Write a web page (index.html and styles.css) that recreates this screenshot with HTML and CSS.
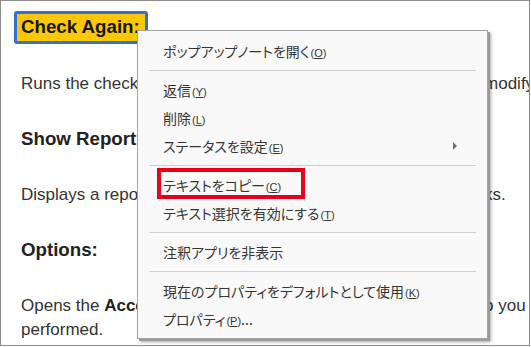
FILE: index.html
```html
<!DOCTYPE html>
<html lang="en">
<head>
<meta charset="utf-8">
<title>Accessibility Checker</title>
<link rel="stylesheet" href="styles.css">
</head>
<body>
<div class="frame">
  <div class="doc">
    <div class="head first"><span class="focus">Check Again:</span></div>
    <p class="line">Runs the checker again on all items. Choose this option after modifying one or more items.</p>
    <div class="head">Show Report:</div>
    <p class="line">Displays a report with links to tips for resolving the failed checks.</p>
    <div class="head">Options:</div>
    <p class="wrap">Opens the <b>Accessibility Checker Options</b> dialog box now, so you can select which checks are performed.</p>
  </div>

  <div class="menu">
    <div class="item">ポップアップノートを開く<span class="key">(<u>O</u>)</span></div>
    <div class="sep"></div>
    <div class="item">返信<span class="key">(<u>Y</u>)</span></div>
    <div class="item">削除<span class="key">(<u>L</u>)</span></div>
    <div class="item sub">ステータスを設定<span class="key">(<u>E</u>)</span><span class="arrow"></span></div>
    <div class="sep"></div>
    <div class="item">テキストをコピー<span class="key">(<u>C</u>)</span><span class="mark"></span></div>
    <div class="item">テキスト選択を有効にする<span class="key">(<u>T</u>)</span></div>
    <div class="sep"></div>
    <div class="item">注釈アプリを非表示</div>
    <div class="sep"></div>
    <div class="item">現在のプロパティをデフォルトとして使用<span class="key">(<u>K</u>)</span></div>
    <div class="item">プロパティ<span class="key">(<u>P</u>)</span>...</div>
  </div>
</div>
</body>
</html>
```

FILE: styles.css
```css
html, body {
  margin: 0;
  padding: 0;
  background: #ffffff;
}

.frame {
  position: relative;
  width: 528px;
  height: 344px;
  border: 1px solid #8c8c8c;
  overflow: hidden;
  background: #ffffff;
}

.doc {
  width: 800px;
  padding: 10px 0 0 20px;
  display: flex;
  flex-direction: column;
  gap: 31.5px;
  font-family: "Liberation Sans", Arial, sans-serif;
  font-size: 17px;
  line-height: 24px;
  color: #333333;
}

.doc p {
  margin: 0;
}

.line {
  white-space: nowrap;
}

.wrap {
  width: 760px;
}

.head {
  font-weight: bold;
  font-size: 18.7px;
  color: #222222;
  height: 24px;
}

.head.first {
  margin-left: -7px;
  height: 33px;
  margin-bottom: -4px;
}

.focus {
  display: inline-block;
  background: #fdc800;
  border: 3px solid #3470d2;
  border-radius: 3px;
  padding: 1px 5px 2px 4px;
  line-height: 24px;
  color: #141414;
}

.doc b {
  color: #222222;
}

.menu {
  position: absolute;
  left: 136px;
  top: 29px;
  width: 349px;
  padding: 6px 0 5px;
  background: #f9f9f9;
  border: 1px solid #a3a3a3;
  box-shadow: 2px 2px 0 #9a9a9a, 3px 3px 3px rgba(0, 0, 0, 0.35);
  font-family: "Noto Sans CJK JP", sans-serif;
  font-size: 14px;
  font-feature-settings: "palt";
  color: #353535;
}

.item {
  position: relative;
  height: 28px;
  line-height: 28px;
  padding-left: 25px;
  white-space: nowrap;
}

.key {
  font-family: "Liberation Sans", Arial, sans-serif;
  font-size: 11px;
  margin-left: 1px;
}

.key u {
  text-underline-offset: 1px;
}

.sep {
  height: 1px;
  margin: 5px 11px 5px;
  background: #d0d0d0;
}

.arrow {
  position: absolute;
  left: 315px;
  top: 10px;
  width: 0;
  height: 0;
  border-top: 4px solid transparent;
  border-bottom: 4px solid transparent;
  border-left: 4px solid #707070;
}

.mark {
  position: absolute;
  left: 19px;
  top: -3px;
  width: 140px;
  height: 23px;
  border: 4px solid #e8001a;
}
```
